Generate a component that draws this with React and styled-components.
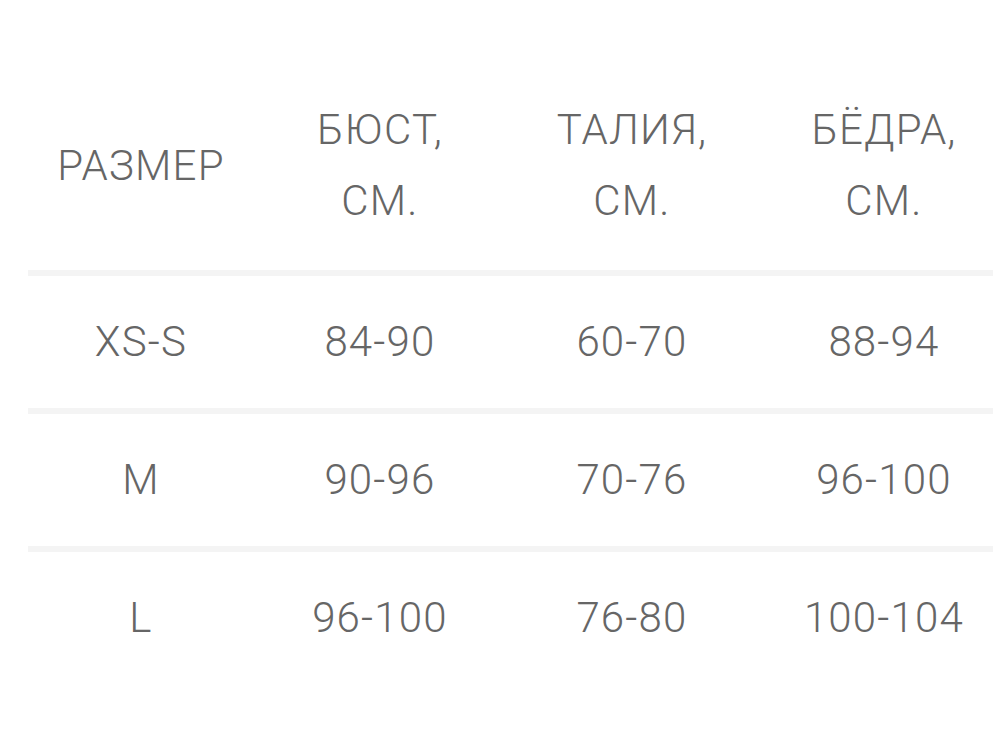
import React from 'react'
import styled, { createGlobalStyle } from 'styled-components'

const GlobalStyle = createGlobalStyle`
    html, body {
        margin: 0;
        padding: 0;
        background: #fff;
        overflow: hidden;
    }
    body {
        font-family: Roboto, "Noto Sans", "Liberation Sans", sans-serif;
    }
`

const headers = [
    ['РАЗМЕР'],
    ['БЮСТ,', 'СМ.'],
    ['ТАЛИЯ,', 'СМ.'],
    ['БЁДРА,', 'СМ.'],
]

const rows = [
    ['XS-S', '84-90', '60-70', '88-94'],
    ['M', '90-96', '70-76', '96-100'],
    ['L', '96-100', '76-80', '100-104'],
]

const App = () => {
    return (
        <Page>
            <GlobalStyle />
            <SizeTable>
                <HeadRow>
                    {headers.map((lines, i) => (
                        <HeadCell key={i}>
                            {lines.map((line, j) => <span key={j}>{line}</span>)}
                        </HeadCell>
                    ))}
                </HeadRow>
                {rows.map((row, i) => (
                    <Row key={i}>
                        {row.map((value, j) => <Cell key={j}>{value}</Cell>)}
                    </Row>
                ))}
            </SizeTable>
        </Page>
    )
}

export default App

const Page = styled.div({
    width: "993px",
    height: "752px",
    paddingTop: "64px",
    boxSizing: "border-box",
    overflow: "hidden",
})

const SizeTable = styled.div({
    marginLeft: "28px",
    width: "1010px",
    color: "#666666",
    fontSize: "42px",
    fontWeight: "300",
    lineHeight: "71px",
    letterSpacing: "1.2px",
})

const HeadRow = styled.div({
    display: "grid",
    gridTemplateColumns: "226px 252px 252px 252px",
    padding: "30px 0 34px",
})

const HeadCell = styled.div({
    display: "flex",
    flexDirection: "column",
    justifyContent: "center",
    alignItems: "center",
    textAlign: "center",
})

const Row = styled.div({
    display: "grid",
    gridTemplateColumns: "226px 252px 252px 252px",
    borderTop: "6px solid #f4f4f4",
    padding: "30px 0 31px",
})

const Cell = styled.div({
    textAlign: "center",
})
